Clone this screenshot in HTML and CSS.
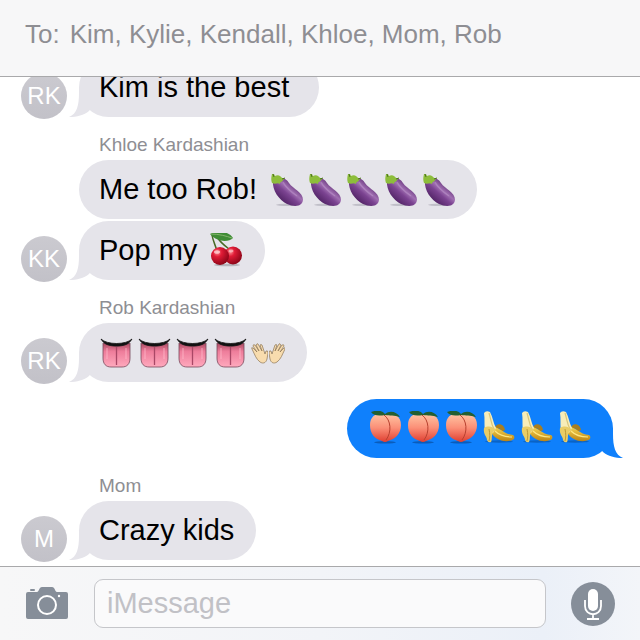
FILE: index.html
```
<!doctype html>
<html lang="en">
<head>
    <meta charset="UTF-8">
    <meta name="viewport" content="width=device-width, initial-scale=1.0">
    <title>Messages</title>
    <link rel="stylesheet" href="styles.css">
</head>
<body>
    <!-- shared drawings -->
    <svg class="defs" aria-hidden="true">
        <defs>
            <linearGradient id="g-eggplant" x1="0.2" y1="0.8" x2="0.75" y2="0.2">
                <stop offset="0" stop-color="#4d2061"/>
                <stop offset="0.45" stop-color="#7b4391"/>
                <stop offset="0.65" stop-color="#a06fb2"/>
                <stop offset="1" stop-color="#5b2970"/>
            </linearGradient>
            <radialGradient id="g-cherry" cx="0.35" cy="0.3" r="0.7">
                <stop offset="0" stop-color="#ff8c92"/>
                <stop offset="0.35" stop-color="#e01b36"/>
                <stop offset="1" stop-color="#8f0619"/>
            </radialGradient>
            <linearGradient id="g-tongue" x1="0" y1="0" x2="0" y2="1">
                <stop offset="0" stop-color="#a8485f"/>
                <stop offset="0.35" stop-color="#ee7d9b"/>
                <stop offset="1" stop-color="#ffa9bd"/>
            </linearGradient>
            <linearGradient id="g-peach" x1="0" y1="0" x2="0" y2="1">
                <stop offset="0" stop-color="#ffc6a4"/>
                <stop offset="0.5" stop-color="#fb8f77"/>
                <stop offset="1" stop-color="#df3f31"/>
            </linearGradient>
            <linearGradient id="g-banana" x1="0" y1="0" x2="0" y2="1">
                <stop offset="0" stop-color="#f6d552"/>
                <stop offset="1" stop-color="#bd8413"/>
            </linearGradient>
        </defs>
        <symbol id="eggplant" viewBox="0 0 34 35">
            <ellipse cx="19" cy="32.800" rx="12" ry="1.200" fill="#9c99a5" opacity="0.5"/>
            <path d="M4 9 C10 4 17 6 20 11 C24 17 34 20 34 28 C33 35 25 35 18 32 C10 28 3 18 4 9Z" fill="url(#g-eggplant)"/>
            <path d="M14 10 C17 16 22 20 28 24" fill="none" stroke="#c9a4d5" stroke-width="1.500" opacity="0.4"/>
            <path d="M3 2 L5 2 L6 4 C9 2 12 4 13 6 L16 6 L14 8 C14 10 11 9 11 12 C8 10 7 13 3 11 C2 8 2 6 3 2Z" fill="#8dbd3b"/>
            <path d="M4 2 L5 5 M13 7 L16 6" fill="none" stroke="#4d7223" stroke-width="1"/>
        </symbol>
        <symbol id="cherries" viewBox="0 0 34 35">
            <ellipse cx="18" cy="32" rx="13" ry="1.300" fill="#88858e" opacity="0.5"/>
            <path d="M3 2 C4 8 6 11 8 18 M8 4 C11 9 16 13 20 16" fill="none" stroke="#486a25" stroke-width="1.500"/>
            <path d="M1 1 C8 -3 20 -2 24 5 C20 9 9 10 1 1Z" fill="#3f8c35"/>
            <path d="M2 1 C10 1 17 3 23 5" fill="none" stroke="#83b56b" stroke-width="1"/>
            <circle cx="24" cy="22.500" r="9" fill="url(#g-cherry)"/>
            <circle cx="11" cy="23" r="9" fill="url(#g-cherry)"/>
            <ellipse cx="8" cy="19" rx="3" ry="1.800" fill="#ffd9db" opacity="0.75"/>
            <ellipse cx="22" cy="18" rx="2.500" ry="1.400" fill="#ffd9db" opacity="0.6"/>
        </symbol>
        <symbol id="tongue" viewBox="0 0 34 35">
            <path d="M4 8 Q18 14 31 8 V23 C31 29 28 32 23 32 H12 C7 32 4 29 4 23Z" fill="url(#g-tongue)" stroke="#77485a" stroke-width="0.800"/>
            <path d="M17.500 12 V30" stroke="#a94766" stroke-width="1.300"/>
            <path d="M8 13 V24 M27 13 V24" stroke="#ffbccb" stroke-width="1.500" opacity="0.5"/>
            <path d="M2 4 C8 10 27 10 33 4 C30 9 26 11 17.500 11 C9 11 5 9 2 4Z" fill="#111" stroke="#111" stroke-width="0.800"/>
        </symbol>
        <!-- left hand, mirrored for the right one -->
        <symbol id="hand" viewBox="0 0 17 22">
            <path d="M1 6 Q0 4 2 5 L6 9 L2 3 Q2 1 4 2 L8 8 L5 2 Q6 0 7 1 L11 8 L9 2 Q10 1 11 2 L14 11 L15 8 Q17 7 17 10 L16 16 C15 20 12 21 9 19 C5 16 4 12 1 6Z" fill="#f8dcae" stroke="#8b7455" stroke-width="0.700"/>
        </symbol>
        <symbol id="hands" viewBox="0 0 34 35">
            <use href="#hand" x="0" y="8" width="17" height="22"/>
            <use href="#hand" x="0" y="8" width="17" height="22" transform="translate(35 0) scale(-1 1)"/>
        </symbol>
        <symbol id="peach" viewBox="0 0 34 35">
            <ellipse cx="18" cy="31.300" rx="11" ry="1.200" fill="#06458f" opacity="0.6"/>
            <path d="M17 4 C21 1 34 2 34 14 C34 23 28 28 21 30 Q18 32 15 30 C8 28 3 23 3 14 C3 3 13 1 17 4Z" fill="url(#g-peach)"/>
            <path d="M17 4 C24 9 25 21 19 29" fill="none" stroke="#b8412f" stroke-width="1"/>
            <path d="M18 4 C12 5 7 5 4 1 C9 -1 15 -1 18 3 C23 -1 30 1 33 6 C27 4 23 5 18 4Z" fill="#235f32"/>
        </symbol>
        <symbol id="banana" viewBox="0 0 34 35">
            <ellipse cx="18" cy="30.500" rx="14" ry="1.200" fill="#06458f" opacity="0.5"/>
            <path d="M13 18 C15 11 23 12 24 19 L20 21 C19 16 17 17 15 21Z" fill="#a87e20"/>
            <path d="M11 16 C18 15 22 23 32 24 Q34 25 33 28 C28 32 15 31 10 21Z" fill="url(#g-banana)"/>
            <path d="M14 20 C19 25 25 26 31 26" fill="none" stroke="#ffe680" stroke-width="1.200"/>
            <path d="M3 2 Q5 -1 9 1 C12 6 12 12 15 17 L12 22 L4 20 C3 13 4 8 3 2Z" fill="#f7edb9"/>
            <path d="M8 2 C10 8 10 13 13 18" fill="none" stroke="#d8c578" stroke-width="1.200"/>
            <path d="M3 17 C8 14 12 16 15 19 C9 21 12 28 10 31 Q7 32 6 29 C6 25 2 24 3 17Z" fill="#e9cd66"/>
            <path d="M8 18 C9 23 9 26 8 30" fill="none" stroke="#af8b2d" stroke-width="0.800"/>
        </symbol>
        <symbol id="tail" viewBox="0 0 30 30">
            <path d="M10 0 V6 C10 18 8 27 0 30 C8 30 15 28 20 24 L28 14 V0Z" fill="currentColor"/>
        </symbol>
    </svg>

    <header class="recipients">
        <span class="to">To:</span>
        <span>Kim, Kylie, Kendall, Khloe, Mom, Rob</span>
    </header>

    <main class="thread">
        <section class="group">
            <span class="avatar">RK</span>
            <div class="messages">
                <p class="bubble">Kim is the best&nbsp;<svg class="tail"><use href="#tail"/></svg></p>
            </div>
        </section>

        <section class="group">
            <span class="avatar">KK</span>
            <div class="messages">
                <h2 class="name">Khloe Kardashian</h2>
                <p class="bubble">Me too Rob!
                    <span class="emojis" role="img" aria-label="Five eggplants">
                        <svg class="emoji"><use href="#eggplant"/></svg>
                        <svg class="emoji"><use href="#eggplant"/></svg>
                        <svg class="emoji"><use href="#eggplant"/></svg>
                        <svg class="emoji"><use href="#eggplant"/></svg>
                        <svg class="emoji"><use href="#eggplant"/></svg>
                    </span>
                </p>
                <p class="bubble">Pop my
                    <span class="emojis" role="img" aria-label="Cherries">
                        <svg class="emoji"><use href="#cherries"/></svg>
                    </span>
                    <svg class="tail"><use href="#tail"/></svg>
                </p>
            </div>
        </section>

        <section class="group">
            <span class="avatar">RK</span>
            <div class="messages">
                <h2 class="name">Rob Kardashian</h2>
                <p class="bubble">
                    <span class="emojis" role="img" aria-label="Four tongues and open hands">
                        <svg class="emoji"><use href="#tongue"/></svg>
                        <svg class="emoji"><use href="#tongue"/></svg>
                        <svg class="emoji"><use href="#tongue"/></svg>
                        <svg class="emoji"><use href="#tongue"/></svg>
                        <svg class="emoji"><use href="#hands"/></svg>
                    </span>
                    <svg class="tail"><use href="#tail"/></svg>
                </p>
            </div>
        </section>

        <section class="group sent">
            <p class="bubble">
                <span class="emojis" role="img" aria-label="Three peaches and three bananas">
                    <svg class="emoji"><use href="#peach"/></svg>
                    <svg class="emoji"><use href="#peach"/></svg>
                    <svg class="emoji"><use href="#peach"/></svg>
                    <svg class="emoji"><use href="#banana"/></svg>
                    <svg class="emoji"><use href="#banana"/></svg>
                    <svg class="emoji"><use href="#banana"/></svg>
                </span>
                <svg class="tail"><use href="#tail"/></svg>
            </p>
        </section>

        <section class="group">
            <span class="avatar">M</span>
            <div class="messages">
                <h2 class="name">Mom</h2>
                <p class="bubble">Crazy kids<svg class="tail"><use href="#tail"/></svg></p>
            </div>
        </section>
    </main>

    <form class="compose">
        <button type="button" class="icon-btn" aria-label="Camera">
            <svg viewBox="0 0 44 44">
                <path d="M2 10 H12 C14 10 14 5 17 5 H27 C30 5 30 10 32 10 H41 Q43 10 43 12 V35 Q43 37 41 37 H3 Q1 37 1 35 V12 Q1 10 3 10Z" fill="#868e99"/>
                <rect x="5" y="7" width="5" height="2" rx="1" fill="#868e99"/>
                <circle cx="22" cy="23" r="9" fill="none" stroke="#fff" stroke-width="2"/>
                <circle cx="34" cy="14" r="1.200" fill="#fff"/>
            </svg>
        </button>
        <input type="text" class="field" placeholder="iMessage" aria-label="iMessage">
        <button type="button" class="icon-btn" aria-label="Dictate">
            <svg viewBox="0 0 44 44">
                <circle cx="22" cy="22" r="22" fill="#868e99"/>
                <rect x="17" y="7" width="10" height="22" rx="5" fill="#fff"/>
                <path d="M14 18 V24 C14 35 30 35 30 24 V18 M22 32 V37 M16 37 H28" fill="none" stroke="#fff" stroke-width="1.800"/>
            </svg>
        </button>
    </form>
</body>
</html>
```

FILE: styles.css
```
* {
    margin: 0;
    padding: 0;
    box-sizing: border-box;
}

body {
    display: flex;
    flex-direction: column;
    height: 100vh;
    background: #fff;
    font-family: "Liberation Sans", Arial, sans-serif;
    overflow: hidden;
}

.defs {
    position: absolute;
    width: 0;
    height: 0;
}

/* top bar */
.recipients {
    display: flex;
    gap: 10px;
    flex: none;
    padding: 18px 25px 26px;
    border-bottom: 1px solid #a9a9ab;
    background: #f7f7f8;
    color: #8e8e93;
    font-size: 26px;
    line-height: 32px;
    white-space: nowrap;
}

/* messages */
.thread {
    display: flex;
    flex: 1;
    flex-direction: column;
    justify-content: flex-end;
    gap: 17px;
    min-height: 0;
    padding: 0 27px 6px 21px;
    overflow: hidden;
}

.group {
    display: grid;
    grid-template-columns: 46px 1fr;
    gap: 12px;
    align-items: end;
    flex: none;
}

.messages {
    display: flex;
    flex-direction: column;
    align-items: flex-start;
    gap: 2px;
}

.avatar {
    width: 46px;
    height: 46px;
    margin-bottom: -2px;
    border-radius: 50%;
    background: linear-gradient(#cbcad0, #c2c1c8);
    color: #fff;
    font-size: 24px;
    line-height: 46px;
    text-align: center;
}

.name {
    padding: 0 20px 2px;
    color: #8e8e93;
    font-size: 19px;
    font-weight: normal;
    line-height: 22px;
}

.bubble {
    display: flex;
    align-items: center;
    gap: 12px;
    position: relative;
    height: 59px;
    padding: 0 22px 0 20px;
    border-radius: 30px;
    background: #e5e4ea;
    color: #000;
    font-size: 29px;
    white-space: nowrap;
}

.emojis {
    display: flex;
    gap: 4px;
}

.emoji {
    width: 34px;
    height: 35px;
    overflow: visible;
}

.tail {
    position: absolute;
    left: -10px;
    bottom: 0;
    width: 30px;
    height: 30px;
    color: #e5e4ea;
}

.sent {
    display: flex;
    justify-content: flex-end;
}

.sent .bubble {
    background: #0f80fc;
}

.sent .tail {
    right: -10px;
    left: auto;
    color: #0f80fc;
    transform: scaleX(-1);
}

/* bottom bar */
.compose {
    display: flex;
    align-items: center;
    gap: 25px;
    flex: none;
    padding: 12px 25px;
    border-top: 1px solid #a9a9ab;
    background: linear-gradient(90deg, #f7f7f8, #f2f4f8 50%, #ebf0f8 85%, #f3f5f9);
}

.icon-btn {
    flex: none;
    width: 44px;
    height: 44px;
    border: none;
    background: none;
    cursor: pointer;
}

.icon-btn svg {
    display: block;
    width: 100%;
    height: 100%;
}

.field {
    flex: 1;
    min-width: 0;
    height: 49px;
    padding: 0 12px;
    border: 1px solid #c5c6ca;
    border-radius: 9px;
    outline: none;
    background: #fafafb;
    color: #000;
    font-family: inherit;
    font-size: 29px;
}

.field::placeholder {
    color: #c1c1c6;
}
```
